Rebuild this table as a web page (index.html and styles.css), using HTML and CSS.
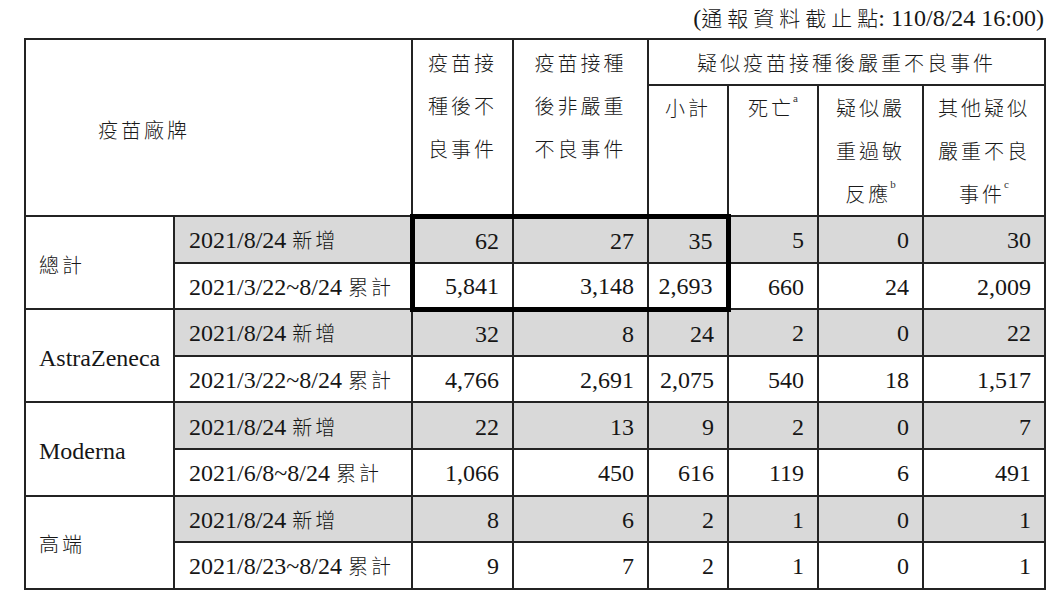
FILE: index.html
```html
<!DOCTYPE html>
<html lang="zh-Hant">
<head>
<meta charset="utf-8">
<title>疫苗接種後不良事件</title>
<link rel="stylesheet" href="styles.css">
</head>
<body>
<div class="page">
  <div class="caption">(<span class="zh cap-zh">通報資料截止點</span>: 110/8/24 16:00)</div>
  <table class="stats">
    <colgroup>
      <col class="c-brand"><col class="c-date"><col class="c-all"><col class="c-non">
      <col class="c-sub"><col class="c-death"><col class="c-ana"><col class="c-other">
    </colgroup>
    <thead>
      <tr class="h1">
        <th colspan="2" rowspan="2" class="brand-h">疫苗廠牌</th>
        <th rowspan="2" class="stack">疫苗接<br>種後不<br>良事件</th>
        <th rowspan="2" class="stack">疫苗接種<br>後非嚴重<br>不良事件</th>
        <th colspan="4" class="group">疑似疫苗接種後嚴重不良事件</th>
      </tr>
      <tr class="h2">
        <th>小計</th>
        <th>死亡<sup>a</sup></th>
        <th>疑似嚴<br>重過敏<br>反應<sup>b</sup></th>
        <th>其他疑似<br>嚴重不良<br>事件<sup>c</sup></th>
      </tr>
    </thead>
    <tbody>
      <tr class="new">
        <td rowspan="2" class="brand"><span class="zh">總計</span></td>
        <td class="date">2021/8/24 <span class="zh">新增</span></td>
        <td class="num bx-l bx-t">62</td>
        <td class="num bx-t">27</td>
        <td class="num bx-r bx-t">35</td>
        <td class="num">5</td>
        <td class="num">0</td>
        <td class="num">30</td>
      </tr>
      <tr class="cum">
        <td class="date">2021/3/22~8/24 <span class="zh">累計</span></td>
        <td class="num bx-l bx-b">5,841</td>
        <td class="num bx-b">3,148</td>
        <td class="num bx-r bx-b">2,693</td>
        <td class="num">660</td>
        <td class="num">24</td>
        <td class="num">2,009</td>
      </tr>
      <tr class="new">
        <td rowspan="2" class="brand">AstraZeneca</td>
        <td class="date">2021/8/24 <span class="zh">新增</span></td>
        <td class="num">32</td>
        <td class="num">8</td>
        <td class="num">24</td>
        <td class="num">2</td>
        <td class="num">0</td>
        <td class="num">22</td>
      </tr>
      <tr class="cum">
        <td class="date">2021/3/22~8/24 <span class="zh">累計</span></td>
        <td class="num">4,766</td>
        <td class="num">2,691</td>
        <td class="num">2,075</td>
        <td class="num">540</td>
        <td class="num">18</td>
        <td class="num">1,517</td>
      </tr>
      <tr class="new">
        <td rowspan="2" class="brand">Moderna</td>
        <td class="date">2021/8/24 <span class="zh">新增</span></td>
        <td class="num">22</td>
        <td class="num">13</td>
        <td class="num">9</td>
        <td class="num">2</td>
        <td class="num">0</td>
        <td class="num">7</td>
      </tr>
      <tr class="cum">
        <td class="date">2021/6/8~8/24 <span class="zh">累計</span></td>
        <td class="num">1,066</td>
        <td class="num">450</td>
        <td class="num">616</td>
        <td class="num">119</td>
        <td class="num">6</td>
        <td class="num">491</td>
      </tr>
      <tr class="new">
        <td rowspan="2" class="brand"><span class="zh">高端</span></td>
        <td class="date">2021/8/24 <span class="zh">新增</span></td>
        <td class="num">8</td>
        <td class="num">6</td>
        <td class="num">2</td>
        <td class="num">1</td>
        <td class="num">0</td>
        <td class="num">1</td>
      </tr>
      <tr class="cum">
        <td class="date">2021/8/23~8/24 <span class="zh">累計</span></td>
        <td class="num">9</td>
        <td class="num">7</td>
        <td class="num">2</td>
        <td class="num">1</td>
        <td class="num">0</td>
        <td class="num">1</td>
      </tr>
    </tbody>
  </table>
</div>
</body>
</html>
```

FILE: styles.css
```css
html, body {
  margin: 0;
  padding: 0;
  background: #ffffff;
}

body {
  font-family: "Liberation Serif", "Noto Sans CJK TC", serif;
  color: #161616;
}

.page {
  width: 1020px;
  margin-left: 24px;
}

.caption {
  height: 38px;
  line-height: 34px;
  text-align: right;
  font-size: 24px;
  white-space: nowrap;
}

.zh {
  font-family: "Noto Sans CJK TC", sans-serif;
  font-weight: 300;
  font-size: 20px;
  letter-spacing: 3px;
}

.caption .cap-zh {
  font-size: 21px;
  letter-spacing: 5px;
  margin-right: -5px;
}

.stats {
  border-collapse: collapse;
  table-layout: fixed;
  width: 1020px;
}

.c-brand { width: 149px; }
.c-date  { width: 238px; }
.c-all   { width: 101px; }
.c-non   { width: 135px; }
.c-sub   { width: 80px; }
.c-death { width: 90px; }
.c-ana   { width: 105px; }
.c-other { width: 122px; }

.stats th,
.stats td {
  border: 2px solid #232323;
  padding: 0;
}

.stats th {
  font-family: "Noto Sans CJK TC", sans-serif;
  font-weight: 300;
  font-size: 20px;
  letter-spacing: 3px;
  line-height: 43px;
  text-align: center;
  vertical-align: top;
  color: #1a1a1a;
}

.h1 { height: 46px; }
.h2 { height: 131px; }

.h1 th { padding-top: 1px; }

.stats th.brand-h {
  text-align: left;
  vertical-align: middle;
  padding: 4px 0 0 72px;
}

.stats th sup {
  font-family: "Liberation Serif", serif;
  font-size: 11px;
  letter-spacing: 0;
  line-height: 0;
  vertical-align: top;
  position: relative;
  top: 12px;
  margin-left: -1px;
  color: #333;
}

.stats tbody tr { height: 46.6px; }

.stats td {
  font-size: 24px;
  line-height: 28px;
  vertical-align: middle;
}

.stats td.brand {
  text-align: left;
  padding-left: 13px;
  padding-top: 4px;
  background: #ffffff;
}

.stats td.date {
  text-align: left;
  padding-left: 14px;
  padding-top: 2px;
  white-space: nowrap;
}

.stats td.num {
  text-align: right;
  padding-right: 13px;
  padding-top: 2px;
}

.new td { background: #d9d9d9; }
.new td.brand { background: #ffffff; }

.stats td.bx-l { border-left: 5px solid #000; }
.stats td.bx-r { border-right: 5px solid #000; }
.stats td.bx-t { border-top: 5px solid #000; }
.stats td.bx-b { border-bottom: 5px solid #000; }
```
